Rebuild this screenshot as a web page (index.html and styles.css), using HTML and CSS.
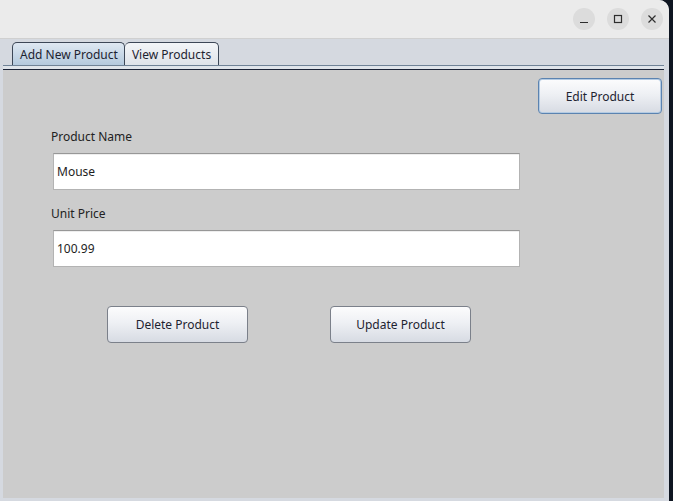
FILE: index.html
```html
<!DOCTYPE html>
<html>
<head>
<meta charset="utf-8">
<link rel="stylesheet" href="styles.css">
</head>
<body>
<div class="window">
  <div class="titlebar">
    <div class="tb-btn"><svg width="22" height="22" viewBox="0 0 22 22"><line x1="7" y1="14.5" x2="15" y2="14.5" stroke="#2e2e2e" stroke-width="1.2"/></svg></div>
    <div class="tb-btn"><svg width="22" height="22" viewBox="0 0 22 22"><rect x="7.5" y="7.5" width="7" height="7" fill="none" stroke="#2e2e2e" stroke-width="1.2"/></svg></div>
    <div class="tb-btn"><svg width="22" height="22" viewBox="0 0 22 22"><path d="M7.5 7.5 L14.5 14.5 M14.5 7.5 L7.5 14.5" stroke="#2e2e2e" stroke-width="1.2"/></svg></div>
  </div>
  <div class="tabarea">
    <div class="tabstrip">
      <div class="tab selected">Add New Product</div>
      <div class="tab">View Products</div>
    </div>
    <div class="tabsep"></div>
  </div>
  <div class="body-row">
    <div class="panel">
      <div class="top-row">
        <button class="btn focused edit">Edit Product</button>
      </div>
      <div class="form">
        <label class="lbl">Product Name</label>
        <div class="field">Mouse</div>
        <label class="lbl second">Unit Price</label>
        <div class="field">100.99</div>
        <div class="actions">
          <button class="btn action">Delete Product</button>
          <button class="btn action">Update Product</button>
        </div>
      </div>
    </div>
  </div>
</div>
</body>
</html>
```
FILE: styles.css
```css
html, body {
  margin: 0;
  padding: 0;
  background: #0e1521;
  width: 673px;
  height: 501px;
  overflow: hidden;
  font-family: "Noto Sans", "Open Sans", sans-serif;
  font-size: 12px;
  color: #222;
}
.window {
  width: 669px;
  height: 501px;
  background: #d5d9e0;
  border-top-right-radius: 10px;
  overflow: hidden;
  display: flex;
  flex-direction: column;
}
.titlebar {
  height: 38px;
  background: #ebebeb;
  border-bottom: 1px solid #d0d0d0;
  display: flex;
  justify-content: flex-end;
  align-items: center;
  gap: 12px;
  padding-right: 6px;
  flex: none;
}
.tb-btn {
  width: 22px;
  height: 22px;
  border-radius: 50%;
  background: #dcdcdc;
  display: flex;
}
.tabarea {
  padding: 0 5px 0 3px;
  flex: none;
}
.tabstrip {
  height: 26px;
  border-bottom: 1px solid #6f8296;
  display: flex;
  align-items: flex-end;
  padding-left: 9px;
}
.tab {
  box-sizing: border-box;
  height: 23px;
  border: 1px solid #3d4757;
  border-bottom: none;
  border-radius: 5px 5px 0 0;
  padding: 0 7px;
  line-height: 24px;
  font-size: 12px;
  color: #1d2330;
  background: linear-gradient(#f3f5f8, #dfe3e9);
}
.tab.selected {
  background: linear-gradient(#dfe8f2, #b4c9dd);
  padding: 0 6px 0 7px;
}
.tab + .tab {
  border-left: none;
}
.tabsep {
  height: 3px;
  background: #dfe4ea;
  border-bottom: 1px solid #1a2236;
}
.body-row {
  display: flex;
  padding: 0 5px 0 3px;
  height: 428px;
  flex: none;
}
.panel {
  flex: 1;
  background: #cccccc;
  display: flex;
  flex-direction: column;
}
.top-row {
  display: flex;
  justify-content: flex-end;
  padding: 8px 2px 0 0;
}
.btn {
  font-family: "Noto Sans", "Open Sans", sans-serif;
  font-size: 12px;
  color: #1d2330;
  border: 1px solid #7b808a;
  border-radius: 4px;
  background: linear-gradient(#fcfcfd 0%, #eef0f4 45%, #d7dbe3 100%);
  padding: 0;
  margin: 0;
  box-sizing: border-box;
}
.btn.edit {
  width: 124px;
  height: 36px;
  padding-top: 1px;
}
.btn.focused {
  border-color: #5b83b0;
  box-shadow: inset 0 0 0 1px #b4cbe3;
}
.form {
  display: flex;
  flex-direction: column;
  padding-left: 48px;
}
.lbl {
  display: block;
  height: 16px;
  line-height: 16px;
  margin-top: 15px;
}
.lbl.second {
  margin-top: 16px;
}
.field {
  margin-top: 8px;
  margin-left: 2px;
  width: 467px;
  height: 37px;
  box-sizing: border-box;
  background: #fff;
  border: 1px solid #b3b3b3;
  border-top-color: #979797;
  box-shadow: inset 0 1px 0 #eeeeee;
  padding-left: 3px;
  line-height: 35px;
  color: #1e1e1e;
}
.actions {
  display: flex;
  gap: 82px;
  margin-top: 39px;
  padding-left: 56px;
}
.btn.action {
  width: 141px;
  height: 37px;
}
```
